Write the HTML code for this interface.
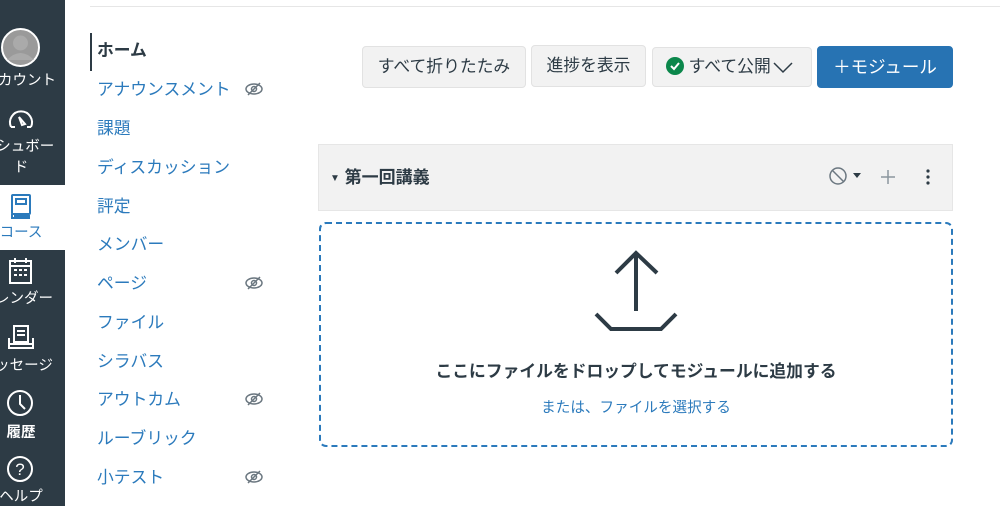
<!DOCTYPE html>
<html><head><meta charset="utf-8"><style>
*{margin:0;padding:0;box-sizing:border-box}
body{width:1000px;height:506px;overflow:hidden;background:#fff;font-family:"Liberation Sans","Noto Sans CJK JP",sans-serif;position:relative}
.side{position:absolute;left:0;top:0;width:65px;height:506px;background:#2d3b45;overflow:hidden}
.si{position:absolute;left:0;width:65px;text-align:center;color:#fff;font-size:14.5px;white-space:nowrap}
.si span{position:absolute;left:50%;transform:translateX(-50%);}
.act{background:#fff;color:#2b7abc}
.nav{position:absolute;left:97px;font-size:16.8px;color:#2b7abc;white-space:nowrap}
.eye{position:absolute;left:245px}
.btn{position:absolute;top:46px;height:42px;background:#f2f2f2;border:1px solid #e2e2e2;border-radius:4px;font-size:16.8px;color:#2d3b45;line-height:40px;text-align:center;white-space:nowrap}
</style></head><body>
<div style="position:absolute;left:90px;top:6px;width:910px;height:1px;background:#e6e6e6"></div>
<div class="side">
 <svg style="position:absolute;left:0px;top:27px" width="41" height="41" viewBox="0 0 41 41"><circle cx="20.5" cy="20.5" r="18.5" fill="#9a9a9a" stroke="#fff" stroke-width="2"/><circle cx="20.5" cy="16" r="7.5" fill="#aaa"/><path d="M7 33 Q20.5 19 34 33" fill="#aaa"/></svg>
 <div class="si" style="top:69px"><span style="left:27px">カウント</span></div>
 <svg style="position:absolute;left:7px;top:108px" width="28" height="22" viewBox="0 0 28 22" fill="none" stroke="#fff" stroke-width="2"><path d="M4 19 A11 11 0 1 1 24 19 M4 19 H8 M20 19 H24 M12 9 L15 17 L18 16 Z"/></svg>
 <div class="si" style="top:135px"><span style="left:18px">ッシュボー</span></div>
 <div class="si" style="top:156px"><span style="left:21px">ド</span></div>
 <div class="si act" style="top:185px;height:65px"><svg style="position:absolute;left:10px;top:8px" width="22" height="28" viewBox="0 0 22 28" fill="none" stroke="#2b7abc" stroke-width="2"><rect x="2" y="2" width="18" height="19" rx="1"/><rect x="6" y="6" width="10" height="5"/><path d="M2 21 V25 H20 M4 23 H20"/></svg><span style="top:36px;left:21px">コース</span></div>
 <svg style="position:absolute;left:8px;top:257px" width="25" height="28" viewBox="0 0 25 28" fill="none" stroke="#fff" stroke-width="2"><rect x="2" y="4" width="21" height="22"/><path d="M2 9 H23 M7 1 V6 M18 1 V6"/><path d="M6 13h3M11 13h3M16 13h3M6 18h3M11 18h3M16 18h3" stroke-width="2"/></svg>
 <div class="si" style="top:287px"><span style="left:24px">レンダー</span></div>
 <svg style="position:absolute;left:7px;top:324px" width="28" height="28" viewBox="0 0 28 28" fill="none" stroke="#fff" stroke-width="2"><rect x="7" y="2" width="14" height="16"/><path d="M10 7h8M10 11h8M2 14 V24 H26 V14 M2 20 H26"/></svg>
 <div class="si" style="top:354px"><span style="left:24px">ッセージ</span></div>
 <svg style="position:absolute;left:6px;top:389px" width="28" height="28" viewBox="0 0 28 28" fill="none" stroke="#fff" stroke-width="2"><circle cx="14" cy="14" r="12"/><path d="M14 6 V15 L19 20"/></svg>
 <div class="si" style="top:421px"><span style="left:21px;font-weight:bold">履歴</span></div>
 <svg style="position:absolute;left:6px;top:455px" width="28" height="28" viewBox="0 0 28 28" fill="none" stroke="#fff" stroke-width="2"><circle cx="14" cy="14" r="12"/><text x="14" y="20" text-anchor="middle" fill="#fff" stroke="none" font-size="17" font-family="Liberation Sans">?</text></svg>
 <div class="si" style="top:485px"><span style="left:21px">ヘルプ</span></div>
</div>
<div style="position:absolute;left:90px;top:33px;width:2px;height:38px;background:#2d3b45"></div>
<div class="nav" style="top:37px;color:#2d3b45;font-weight:bold">ホーム</div>
<div class="nav" style="top:76px">アナウンスメント</div>
<div class="nav" style="top:115px">課題</div>
<div class="nav" style="top:154px">ディスカッション</div>
<div class="nav" style="top:193px">評定</div>
<div class="nav" style="top:231px">メンバー</div>
<div class="nav" style="top:270px">ページ</div>
<div class="nav" style="top:309px">ファイル</div>
<div class="nav" style="top:348px">シラバス</div>
<div class="nav" style="top:386px">アウトカム</div>
<div class="nav" style="top:425px">ルーブリック</div>
<div class="nav" style="top:464px">小テスト</div>
<svg class="eye" style="top:82px" width="18" height="14" viewBox="0 0 18 14" fill="none" stroke="#6b7780" stroke-width="1.5"><ellipse cx="9" cy="7" rx="8" ry="5"/><circle cx="9" cy="7" r="2.5"/><path d="M3 13 L15 1"/></svg>
<svg class="eye" style="top:276px" width="18" height="14" viewBox="0 0 18 14" fill="none" stroke="#6b7780" stroke-width="1.5"><ellipse cx="9" cy="7" rx="8" ry="5"/><circle cx="9" cy="7" r="2.5"/><path d="M3 13 L15 1"/></svg>
<svg class="eye" style="top:392px" width="18" height="14" viewBox="0 0 18 14" fill="none" stroke="#6b7780" stroke-width="1.5"><ellipse cx="9" cy="7" rx="8" ry="5"/><circle cx="9" cy="7" r="2.5"/><path d="M3 13 L15 1"/></svg>
<svg class="eye" style="top:470px" width="18" height="14" viewBox="0 0 18 14" fill="none" stroke="#6b7780" stroke-width="1.5"><ellipse cx="9" cy="7" rx="8" ry="5"/><circle cx="9" cy="7" r="2.5"/><path d="M3 13 L15 1"/></svg>

<div class="btn" style="left:362px;width:164px">すべて折りたたみ</div>
<div class="btn" style="left:531px;width:115px;top:45px">進捗を表示</div>
<div class="btn" style="left:652px;width:160px;top:47px;height:40px;line-height:38px;text-align:left;padding-left:13px"><svg style="vertical-align:-3px" width="18" height="18" viewBox="0 0 18 18"><circle cx="9" cy="9" r="9" fill="#0b874b"/><path d="M5 9 L8 12 L13 6" fill="none" stroke="#fff" stroke-width="2"/></svg> すべて公開<svg style="vertical-align:-2px;margin-left:2px" width="20" height="12" viewBox="0 0 20 12" fill="none" stroke="#2d3b45" stroke-width="1.5"><path d="M1 1 L10 10 L19 1"/></svg></div>
<div class="btn" style="left:817px;width:136px;background:#2773b3;border-color:#2773b3;color:#fff;font-size:17.5px">＋モジュール</div>

<div style="position:absolute;left:318px;top:144px;width:635px;height:67px;background:#f2f2f2;border:1px solid #e6e6e6"></div>
<div style="position:absolute;left:330px;top:163px;font-size:17px;font-weight:bold;color:#2d3b45"><span style="font-size:10px;vertical-align:2px">▼</span> 第一回講義</div>
<svg style="position:absolute;left:829px;top:166px" width="34" height="20" viewBox="0 0 34 20" fill="none" stroke="#6b7780" stroke-width="1.5"><circle cx="9" cy="10" r="8"/><path d="M3.5 4.5 L14.5 15.5"/><path d="M24 7 H32 L28 12Z" fill="#2d3b45" stroke="none"/></svg>
<svg style="position:absolute;left:880px;top:169px" width="16" height="16" viewBox="0 0 16 16" stroke="#8b969e" stroke-width="1.5"><path d="M8 1V15M1 8H15"/></svg>
<svg style="position:absolute;left:925px;top:168px" width="6" height="18" viewBox="0 0 6 18" fill="#2d3b45"><circle cx="3" cy="3" r="1.6"/><circle cx="3" cy="9" r="1.6"/><circle cx="3" cy="15" r="1.6"/></svg>

<div style="position:absolute;left:319px;top:222px;width:634px;height:225px;border:2px dashed #2b7abc;border-radius:7px"></div>
<svg style="position:absolute;left:590px;top:246px" width="95" height="90" viewBox="590 246 95 90" fill="none" stroke="#2d3b45" stroke-width="4"><path d="M616 273 L636 253 L657 273 M636 253 V311 M596 314 L611 329 H661 L676 314"/></svg>
<div style="position:absolute;left:0;width:1272px;top:358px;text-align:center;font-size:16.8px;font-weight:bold;color:#2d3b45">ここにファイルをドロップしてモジュールに追加する</div>
<div style="position:absolute;left:0;width:1272px;top:396px;text-align:center;font-size:14.6px;color:#2b7abc">または、ファイルを選択する</div>
</body></html>
